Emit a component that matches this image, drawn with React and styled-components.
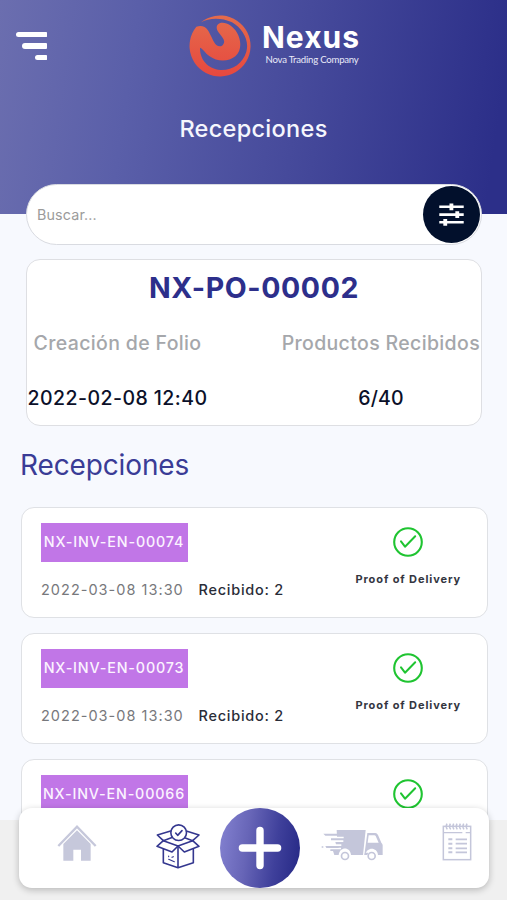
import React from "react";
import styled, { createGlobalStyle } from "styled-components";

const GlobalStyle = createGlobalStyle`
  * { box-sizing: border-box; }
  body { margin: 0; font-family: Inter, "Liberation Sans", sans-serif; }
`;

const Screen = styled.div`
  width: 507px;
  height: 900px;
  overflow: hidden;
  display: flex;
  flex-direction: column;
  background: #f7f9fe;
`;

const Header = styled.header`
  flex: none;
  height: 214px;
  display: grid;
  grid-template-columns: 173px 1fr;
  grid-template-rows: 94px 1fr;
  background: linear-gradient(98deg, #6b6eaf 0%, #5a5fa9 26%, #464a9b 58%, #2c2f89 96%);
`;

const MenuButton = styled.button`
  align-self: start;
  justify-self: start;
  margin: 32px 0 0 15px;
  padding: 0;
  border: 0;
  background: none;
  display: flex;
  flex-direction: column;
  align-items: flex-end;
  gap: 6.3px;
  width: 32px;
`;

const MenuLine = styled.span`
  width: ${(p) => p.$width}px;
  height: 5.2px;
  background: #fff;
  border-radius: 3px 1px 1px 3px;
`;

const Brand = styled.div`
  display: flex;
  align-items: flex-start;
  padding: 15px 0 0 16px;
  gap: 11px;
`;

const BrandText = styled.div`
  display: flex;
  flex-direction: column;
  color: #fff;
  white-space: nowrap;
`;

const BrandName = styled.span`
  font: 700 30px/34px Inter, sans-serif;
  letter-spacing: 1px;
  margin-top: 5px;
`;

const BrandTagline = styled.span`
  font: 400 9.6px/12px Lato, sans-serif;
  letter-spacing: -0.22px;
  margin-left: 3.5px;
  color: #e9eaf8;
`;

const PageTitle = styled.h1`
  grid-column: 1 / -1;
  margin: 20px 0 0;
  text-align: center;
  color: #f5f6fd;
  font-size: 23.5px;
  line-height: 30px;
  font-weight: 500;
  letter-spacing: 0.3px;
`;

const SearchBar = styled.div`
  flex: none;
  width: 456px;
  height: 61px;
  margin: -30px 0 0 26px;
  padding: 0 1.5px 0 10px;
  display: flex;
  align-items: center;
  justify-content: space-between;
  background: #fff;
  border: 1px solid #d9dbe1;
  border-radius: 31px;
`;

const SearchInput = styled.input`
  width: 300px;
  padding: 0;
  border: 0;
  outline: 0;
  background: none;
  font: 400 14.3px/20px Inter, sans-serif;
  letter-spacing: 0.15px;
  &::placeholder { color: #9b9b9b; opacity: 1; }
`;

const FilterButton = styled.button`
  width: 57px;
  height: 57px;
  padding: 0;
  border: 0;
  border-radius: 50%;
  background: #02102c;
  display: grid;
  place-items: center;
`;

const OrderCard = styled.section`
  flex: none;
  width: 456px;
  height: 167px;
  margin: 14px 0 0 26px;
  border: 1.5px solid #dedfe3;
  border-radius: 14px;
  background: #fff;
  display: grid;
  grid-template-columns: 181px 1fr;
  grid-template-rows: 56px 54px 1fr;
  white-space: nowrap;
`;

const OrderNumber = styled.h2`
  grid-column: 1 / -1;
  margin: 10px 0 0;
  text-align: center;
  font-size: 28.5px;
  line-height: 36px;
  font-weight: 700;
  letter-spacing: 0.6px;
  color: #2d2f8b;
`;

const OrderLabel = styled.span`
  justify-self: ${(p) => p.$align || "center"};
  margin-top: 14px;
  margin-right: ${(p) => (p.$align ? 1 : 0)}px;
  font-size: 19.5px;
  line-height: 26px;
  font-weight: 500;
  letter-spacing: 0.35px;
  color: #a5a7ab;
`;

const OrderValue = styled.span`
  justify-self: center;
  margin-top: 15px;
  padding-left: ${(p) => p.$indent || 0}px;
  font-size: 19.5px;
  line-height: 26px;
  font-weight: 500;
  letter-spacing: ${(p) => (p.$indent ? 0.2 : 0.45)}px;
  color: #0b1029;
`;

const SectionTitle = styled.h2`
  flex: none;
  margin: 20px 0 0 20px;
  height: 60px;
  font-size: 28px;
  line-height: 38px;
  font-weight: 400;
  letter-spacing: -0.13px;
  color: #3a3c96;
`;

const ReceiptList = styled.div`
  height: 314px;
  flex: none;
  overflow: hidden;
  padding: 0.6px 19.5px 0 20.5px;
  display: flex;
  flex-direction: column;
  gap: 14.6px;
`;

const ReceiptCard = styled.article`
  flex: none;
  height: 111.4px;
  padding: 15px 25.5px 0 19px;
  border: 1.5px solid #dfe1e5;
  border-radius: 13px;
  background: #fff;
  display: flex;
  justify-content: space-between;
`;

const ReceiptInfo = styled.div`
  display: flex;
  flex-direction: column;
  align-items: flex-start;
`;

const ReceiptBadge = styled.span`
  width: 147px;
  height: 39px;
  background: #c176e7;
  color: #fbf3ff;
  text-align: center;
  font-size: 14.3px;
  line-height: 38px;
  font-weight: 500;
  letter-spacing: 0.85px;
  white-space: nowrap;
`;

const ReceiptMeta = styled.div`
  display: flex;
  margin-top: 18px;
  font-size: 14.5px;
  line-height: 20px;
  letter-spacing: 0.75px;
  white-space: nowrap;
`;

const ReceiptDate = styled.time`
  width: 158px;
  padding-left: 0.5px;
  letter-spacing: 1.02px;
  color: #77787c;
`;

const ReceiptCount = styled.span`
  font-weight: 500;
  color: #292c38;
`;

const ReceiptProof = styled.div`
  display: flex;
  flex-direction: column;
  align-items: center;
  padding-top: 4px;
  gap: 14px;
  font-size: 11px;
  line-height: 16px;
  font-weight: 700;
  letter-spacing: 0.9px;
  color: #34363f;
`;

const TabArea = styled.footer`
  flex: none;
  height: 80px;
  padding: 0 18px 0 19px;
  background: #f0f0f0;
`;

const TabBar = styled.nav`
  position: relative;
  height: 80px;
  margin-top: -12px;
  border-radius: 13px;
  background: #fff;
  box-shadow: 0 2px 7px rgba(0, 0, 0, 0.24);
  display: grid;
  grid-template-columns: 116px 85px 80px 104px 85px;
`;

const TabItem = styled.button`
  padding: ${(p) => p.$padding};
  border: 0;
  background: none;
  display: flex;
  justify-content: center;
  align-items: flex-start;
`;

const AddButton = styled.button`
  width: 80px;
  height: 80px;
  padding: 0;
  border: 0;
  border-radius: 50%;
  background: linear-gradient(98deg, #8583d2 0%, #6765b7 35%, #3f409b 68%, #242784 100%);
  display: grid;
  place-items: center;
`;

const Icon = styled.svg`
  display: block;
  flex: none;
`;

const LogoMark = () => (
  <Icon width="62" height="62" viewBox="56 45 186 186">
    <defs>
      <linearGradient id="flame" x1="0" y1="0" x2="0" y2="1">
        <stop offset="0" stopColor="#e56b4b" />
        <stop offset="1" stopColor="#e6483f" />
      </linearGradient>
    </defs>
    <path
      fill="url(#flame)"
      d="M92 66.4 A91.5 91.5 0 1 1 78 80.3 C92 75 105 79 112 90 C122 104 128 126 138 135 C146 142 158 140 161 128 C164 118 152 108 144 96 C136 84 138 74 148 70 C165 64 188 78 200 98 C213 120 215 152 195 169 C175 186 140 186 118 169 C103 158 98 146 89 143 C88 178 112 208 150 210 C185 212 218 190 228 155 C238 120 215 84 185 67 C150 51 115 55 92 66.4 Z"
    />
  </Icon>
);

const FilterIcon = () => (
  <Icon width="25" height="24" viewBox="0 0 26 24" preserveAspectRatio="none" stroke="#fff" fill="none">
    <path d="M.3 3.8h25.4M.3 11.6h25.4M.3 19.3h25.4" strokeWidth="2.6" />
    <path d="M12.9 .4v6.8M19 8.2v6.8M6.5 15.9v6.8" strokeWidth="4" />
  </Icon>
);

const CheckIcon = () => (
  <Icon width="30" height="30" viewBox="0 0 30 30" fill="none" stroke="#1fc431">
    <circle cx="15" cy="15" r="13.8" strokeWidth="2.1" />
    <path d="M8 14.3l4 5.4L22.2 9.2" strokeWidth="2" strokeLinecap="round" strokeLinejoin="round" />
  </Icon>
);

const HomeIcon = () => (
  <Icon width="40" height="38" viewBox="171 223 120 114">
    <path d="M175 289L231 231l56 58" fill="none" stroke="#c6c8db" strokeWidth="7" />
    <path d="M190 283l41-41 41 41v50h-29v-33h-23v33h-30z" fill="#c6c8db" />
  </Icon>
);

const BoxIcon = () => (
  <Icon
    width="46"
    height="46"
    viewBox="466 219 138 138"
    fill="none"
    stroke="#34378f"
    strokeWidth="4.8"
    strokeLinejoin="round"
    strokeLinecap="round"
  >
    <path d="M491 272l-18-17 40-12M579 272l19-17-38-12M491 272l24-9M579 272l-22-8" />
    <path d="M491 272l44 16-18 18-45-17zM579 272l-44 16 19 18 44-17z" />
    <path d="M491 298v40l44 15 46-15v-40M535 289v64" />
    <circle cx="537" cy="248" r="23.5" fill="#fff" />
    <path d="M528 249l6 7 13-14" />
    <path d="M507 318v2M517 322l4-2M507 328l17 7" strokeWidth="3.4" />
  </Icon>
);

const PlusIcon = () => (
  <Icon width="44" height="44" viewBox="0 0 44 44" stroke="#fff" strokeWidth="7.4" strokeLinecap="round">
    <path d="M22 4.4v35.2M4.4 22h35.2" />
  </Icon>
);

const TruckIcon = () => (
  <Icon width="64" height="34" viewBox="60 232 192 102" fill="#c4c6da">
    <path d="M107 238h87l-8 75h-36c-2-26-34-26-37 0h-13l-4-12h-8v-5h32v-5H86v-5h35v-5h-16l-2-7h24v-5H90v-6h38v-5H108z" />
    <path d="M67 249h42v6H73zM73 286h40v6H76zM62 287h5v4h-5z" />
    <path
      fillRule="evenodd"
      d="M199 247h24q5 0 8 6l10 23q4 3 4 8v29h-14c-2-25-35-25-38 0h-3zM203 254l-3 22h33l-9-20q-1-2-4-2z"
    />
    <path d="M199 313h-8l1-7h10z" />
    <circle cx="132" cy="316" r="10.5" fill="#fff" stroke="#c4c6da" strokeWidth="5" />
    <circle cx="212" cy="316" r="10.5" fill="#fff" stroke="#c4c6da" strokeWidth="5" />
  </Icon>
);

const NotesIcon = () => (
  <Icon width="30" height="40" viewBox="427 216 90 120" fill="none" stroke="#c4c6da">
    <rect x="431" y="229" width="82" height="100" strokeWidth="4.5" />
    <path d="M431 248h57M498 248h15" strokeWidth="3.5" />
    <path
      d="M442 221q-5 9 1 17M452 221q-5 9 1 17M462 221q-5 9 1 17M472 221q-5 9 1 17M482 221q-5 9 1 17M492 221q-5 9 1 17M502 221q-5 9 1 17"
      strokeWidth="4.5"
    />
    <path d="M446 268h12M446 281h12M446 295h12M446 307h12" strokeWidth="6" />
    <path d="M468 268h34M468 281h34M468 295h34M468 307h34" strokeWidth="5" />
  </Icon>
);

const receipts = [
  { id: "NX-INV-EN-00074", date: "2022-03-08 13:30", count: 2 },
  { id: "NX-INV-EN-00073", date: "2022-03-08 13:30", count: 2 },
  { id: "NX-INV-EN-00066", date: "2022-03-08 13:30", count: 2 },
];

const Receipt = ({ id, date, count }) => (
  <ReceiptCard>
    <ReceiptInfo>
      <ReceiptBadge>{id}</ReceiptBadge>
      <ReceiptMeta>
        <ReceiptDate>{date}</ReceiptDate>
        <ReceiptCount>Recibido: {count}</ReceiptCount>
      </ReceiptMeta>
    </ReceiptInfo>
    <ReceiptProof>
      <CheckIcon />
      <span>Proof of Delivery</span>
    </ReceiptProof>
  </ReceiptCard>
);

export default function App() {
  return (
    <Screen>
      <GlobalStyle />
      <Header>
        <MenuButton aria-label="Menú">
          <MenuLine $width={31} />
          <MenuLine $width={25} />
          <MenuLine $width={12} />
        </MenuButton>
        <Brand>
          <LogoMark />
          <BrandText>
            <BrandName>Nexus</BrandName>
            <BrandTagline>Nova Trading Company</BrandTagline>
          </BrandText>
        </Brand>
        <PageTitle>Recepciones</PageTitle>
      </Header>
      <SearchBar>
        <SearchInput placeholder="Buscar..." />
        <FilterButton aria-label="Filtros">
          <FilterIcon />
        </FilterButton>
      </SearchBar>
      <OrderCard>
        <OrderNumber>NX-PO-00002</OrderNumber>
        <OrderLabel>Creación de Folio</OrderLabel>
        <OrderLabel $align="end">Productos Recibidos</OrderLabel>
        <OrderValue>2022-02-08 12:40</OrderValue>
        <OrderValue $indent={73}>6/40</OrderValue>
      </OrderCard>
      <SectionTitle>Recepciones</SectionTitle>
      <ReceiptList>
        {receipts.map((r) => (
          <Receipt key={r.id} {...r} />
        ))}
      </ReceiptList>
      <TabArea>
        <TabBar>
          <TabItem aria-label="Inicio" $padding="16px 0 0">
            <HomeIcon />
          </TabItem>
          <TabItem aria-label="Recepciones" $padding="15px 0 0 1px">
            <BoxIcon />
          </TabItem>
          <AddButton aria-label="Agregar">
            <PlusIcon />
          </AddButton>
          <TabItem aria-label="Envíos" $padding="20px 0 0 1px">
            <TruckIcon />
          </TabItem>
          <TabItem aria-label="Notas" $padding="14px 0 0 21px">
            <NotesIcon />
          </TabItem>
        </TabBar>
      </TabArea>
    </Screen>
  );
}
